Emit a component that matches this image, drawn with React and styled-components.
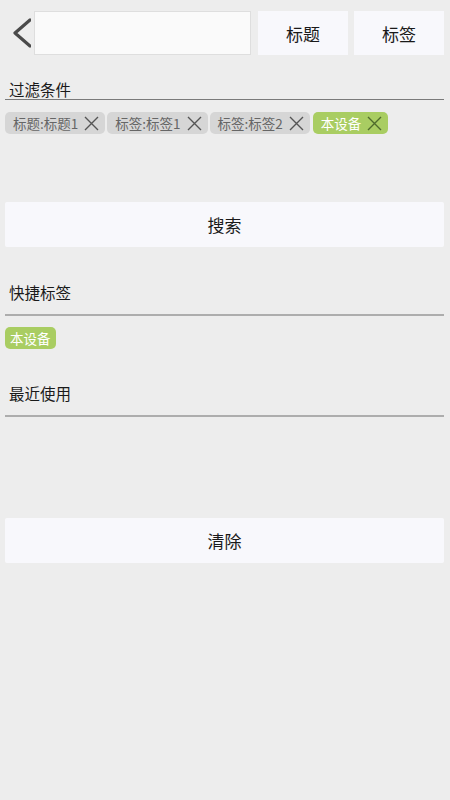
import React from "react";
import styled, { createGlobalStyle } from "styled-components";

const GlobalStyle = createGlobalStyle`
  html, body { margin: 0; padding: 0; background: #ededed; }
  body { font-family: "Noto Sans CJK SC", "Noto Sans", sans-serif; color: #1a1a1a; }
  * { box-sizing: border-box; }
`;

const Page = styled.div`
  min-height: 800px;
  background: #ededed;
  padding: 0 6px 0 5px;
  display: flex;
  flex-direction: column;
`;

const Header = styled.div`
  margin-top: 11px;
  height: 44px;
  display: flex;
  gap: 6px;
`;

const BackButton = styled.button`
  width: 29px;
  margin-right: -6px;
  padding: 0;
  border: none;
  background: transparent;
  display: flex;
  align-items: center;
  justify-content: flex-start;
`;

const SearchInput = styled.input`
  flex: 1;
  min-width: 0;
  height: 44px;
  background: #fafafa;
  border: 1px solid #dedede;
  outline: none;
  font-size: 16px;
  font-family: inherit;
  margin-right: 1px;
`;

const HeaderButton = styled.button`
  width: 90px;
  height: 44px;
  border: none;
  background: #f8f8fc;
  font-family: inherit;
  font-size: 17px;
  color: #1a1a1a;
  padding: 0;
`;

const SectionTitle = styled.div`
  margin-top: ${(p) => p.$top}px;
  padding-left: 4px;
  font-size: 15.5px;
  line-height: ${(p) => (p.$strong ? 19 : 20)}px;
  padding-bottom: ${(p) => (p.$strong ? 0 : 12)}px;
  border-bottom: ${(p) => (p.$strong ? "1px solid #7a7a7a" : "2px solid #adadad")};
  color: #1a1a1a;
`;

const ChipRow = styled.div`
  margin-top: ${(p) => p.$top}px;
  display: flex;
  gap: 2px;
  flex-wrap: wrap;
`;

const Chip = styled.div`
  height: 22px;
  border-radius: 5px;
  display: flex;
  align-items: center;
  padding: ${(p) => (p.$closable ? "0 6px 0 8px" : "0 5px")};
  background: ${(p) => (p.$green ? "#a9cd62" : "#d6d6d6")};
  color: ${(p) => (p.$green ? "#ffffff" : "#666666")};
  font-size: 13.5px;
  line-height: 22px;
  margin-left: ${(p) => (p.$gapBefore ? 1 : 0)}px;
`;

const CloseIcon = styled.svg`
  width: 15px;
  height: 15px;
  margin-left: 6px;
  flex-shrink: 0;
`;

const WideButton = styled.button`
  margin-top: ${(p) => p.$top}px;
  height: 45px;
  width: 100%;
  border: none;
  background: #f8f8fc;
  font-family: inherit;
  font-size: 17px;
  color: #1a1a1a;
  border-radius: 2px;
  padding: 0;
`;

function X({ color }) {
  return (
    <CloseIcon viewBox="0 0 15 15">
      <path d="M1 1 L14 14 M14 1 L1 14" stroke={color} strokeWidth="1.4" fill="none" />
    </CloseIcon>
  );
}

const filters = [
  { label: "标题:标题1" },
  { label: "标签:标签1" },
  { label: "标签:标签2" },
  { label: "本设备", green: true },
];

export default function App() {
  return (
    <>
      <GlobalStyle />
      <Page>
        <Header>
          <BackButton aria-label="back">
            <svg width="26" height="32" viewBox="0 0 26 32">
              <polyline points="25,3 10,16 25,29" fill="none" stroke="#4a4a4a" strokeWidth="3.2" strokeLinecap="round" strokeLinejoin="round" />
            </svg>
          </BackButton>
          <SearchInput />
          <HeaderButton>标题</HeaderButton>
          <HeaderButton>标签</HeaderButton>
        </Header>

        <SectionTitle $top={25} $strong>过滤条件</SectionTitle>
        <ChipRow $top={12}>
          {filters.map((f, i) => (
            <Chip key={i} $green={f.green} $closable $gapBefore={f.green}>
              {f.label}
              <X color={f.green ? "#4f6b2c" : "#555555"} />
            </Chip>
          ))}
        </ChipRow>

        <WideButton $top={68}>搜索</WideButton>

        <SectionTitle $top={35}>快捷标签</SectionTitle>
        <ChipRow $top={11}>
          <Chip $green>本设备</Chip>
        </ChipRow>

        <SectionTitle $top={34}>最近使用</SectionTitle>

        <WideButton $top={101}>清除</WideButton>
      </Page>
    </>
  );
}
